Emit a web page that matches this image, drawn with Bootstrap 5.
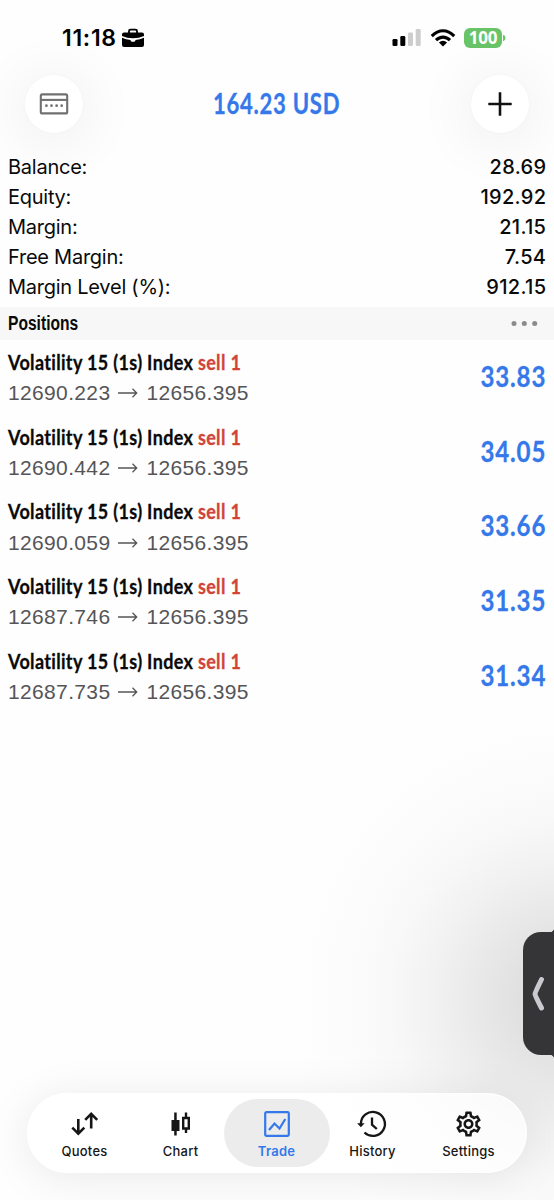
<!DOCTYPE html>
<html lang="en">
<head>
<meta charset="utf-8">
<meta name="viewport" content="width=device-width, initial-scale=1">
<title>Trade</title>
<link href="https://cdn.jsdelivr.net/npm/bootstrap@5.3.0/dist/css/bootstrap.min.css" rel="stylesheet">
<style>
body{background:#fefefe;font-family:Inter,"Liberation Sans",sans-serif;color:#0a0a0a}
.screen{height:1200px;overflow:hidden;
 background:radial-gradient(ellipse 275px 285px at 565px 1000px,#dcdcdc 0,#e1e1e1 18%,#e9e9e9 33%,#f1f1f1 47%,#f8f8f8 63%,#fcfcfc 80%,rgba(254,254,254,0) 100%)}
.status{height:75px;padding:1px 48px 0 62px}
.clock{font-size:23px;font-weight:600;letter-spacing:.7px;line-height:1;color:#000}
.battery{width:38px;height:20px;border-radius:6px;background:#68c466;color:#fff;font:700 17px/20px "Open Sans",sans-serif;letter-spacing:-.2px}
.topbar{height:58px;padding:0 25px}
.round-btn{width:58px;height:58px;border:0;background:#fff;box-shadow:0 6px 56px 8px rgba(0,0,0,.06),0 0 3px rgba(0,0,0,.03)}
.blue{color:#3478ea}
.squeeze{font-family:Lato,"Liberation Sans",sans-serif;font-weight:700;display:inline-block;white-space:nowrap;line-height:1;-webkit-text-stroke:.3px currentColor}
.total{font-size:28px;letter-spacing:.9px;transform:scaleX(.79);padding-bottom:3px}
.summary{padding:19px 8px 5px}
.summary>div{height:30px;font-size:20px;line-height:31px}
.summary dt{font-weight:400;letter-spacing:-.25px}
.summary dd{font-weight:500;margin:0 -.3px 0 0;letter-spacing:.3px}
.section-bar{height:33px;background:#f7f7f7;padding:0 16px 0 8px}
.section-name{font-family:"Liberation Sans",sans-serif;font-weight:700;font-size:20px;line-height:1;transform:scaleX(.78);transform-origin:left;padding-bottom:1px}
.position{height:74.67px;padding:10px 8px 0}
.symbol{font-size:21.5px;letter-spacing:.4px;transform:scaleX(.837);transform-origin:left;height:24px;line-height:24px}
.sell{color:#d0443a}
.prices{font-family:"Liberation Sans",sans-serif;font-size:21px;letter-spacing:.35px;line-height:24px;color:#555558;margin-top:5.4px}
.profit{font-size:29px;letter-spacing:1px;transform:scaleX(.83);transform-origin:right;margin-top:11px}
.handle{right:0;top:932px;width:31px;height:123px;background:#353538;border-radius:18px 0 0 18px}
.handle::before,.handle::after{content:"";position:absolute;right:0;width:3px;height:3px}
.handle::before{top:-3px;background:radial-gradient(circle at 0 0,transparent 2.5px,#353538 3px)}
.handle::after{bottom:-3px;background:radial-gradient(circle at 0 100%,transparent 2.5px,#353538 3px)}
.tabs{width:500px;height:80px;margin:0 0 27px 27px;padding:0 9px 0 9.5px;border-radius:40px;background:rgba(255,255,255,.72);box-shadow:0 5px 45px rgba(0,0,0,.085),inset 0 0 0 1.500px rgba(255,255,255,.7)}
.tab{width:96px;height:68px;color:#161616;font-size:13px;font-weight:500;letter-spacing:.25px;line-height:16px;padding-top:11px}
.tab svg{margin-bottom:5px}
.tab-on{width:106px;margin:0 -5px;background:#ececec;border-radius:34px;color:#3478ea;font-weight:600}
</style>
</head>
<body>
<main class="screen position-relative d-flex flex-column">
 <header>
  <div class="status d-flex align-items-center">
   <span class="clock">11:18</span>
   <svg class="ms-1" width="24" height="20" viewBox="0 0 24 20"><path d="M8 5V3q0-1.300 1.500-1.300h5Q16 1.700 16 3v2" fill="none" stroke="#000" stroke-width="1.800"/><path d="M3 4.500h18q2 0 2 2V8Q18 10.300 12 10.300T1 8V6.500q0-2 2-2zM1 9.700q4 2 8.500 2.300 0 1.700 1.500 1.700h2q1.500 0 1.500-1.700Q19 11.700 23 9.700V17q0 2-2 2H3q-2 0-2-2z"/></svg>
   <div class="ms-auto d-flex align-items-center">
    <svg width="29" height="20" viewBox="0 0 29 20"><rect x=".5" y="11" width="5" height="7" rx="1.300"/><rect x="8.300" y="8" width="5" height="10" rx="1.300"/><g fill="#cdcdcd"><rect x="16" y="4.500" width="5" height="13.500" rx="1.300"/><rect x="23.700" y="1" width="5" height="17" rx="1.300"/></g></svg>
    <svg style="margin-left:9px" width="26" height="20" viewBox="0 0 26 20" fill="none" stroke="#000" stroke-width="3.100"><path d="M1.800 8.100Q7 2.800 13 2.800t11.200 5.300M6 12.200q3.200-3.100 7-3.100t7 3.100"/><path d="M8.900 14.500q4.100-3.400 8.200 0L13 18.400z" fill="#000" stroke="none"/></svg>
    <span class="battery ms-2 text-center">100</span><svg width="4" height="8" viewBox="0 0 4 8"><path d="M1 .8Q3.500 1.400 3.500 4T1 7.200z" fill="#68c466"/></svg>
   </div>
  </div>
  <div class="topbar d-flex align-items-center justify-content-between">
   <button class="round-btn rounded-circle p-0" aria-label="Accounts"><svg class="d-block mx-auto" width="30" height="22" viewBox="0 0 30 22"><g fill="none" stroke="#707070" stroke-width="2.100"><rect x="1.800" y="1.400" width="26.400" height="19" rx="1.500"/><path d="M2 6.900h26"/></g><g fill="#707070"><circle cx="7.400" cy="12.700" r="1.350"/><circle cx="12.500" cy="12.700" r="1.350"/><circle cx="17.600" cy="12.700" r="1.350"/><circle cx="22.700" cy="12.700" r="1.350"/></g></svg></button>
   <h1 class="squeeze total blue m-0">164.23 USD</h1>
   <button class="round-btn rounded-circle p-0" aria-label="New order"><svg class="d-block mx-auto" width="24" height="24" viewBox="0 0 24 24"><path d="M12 .3v23.400M.3 12h23.400" stroke="#111" stroke-width="2.600"/></svg></button>
  </div>
 </header>
 <dl class="summary m-0">
  <div class="d-flex justify-content-between"><dt>Balance:</dt><dd>28.69</dd></div>
  <div class="d-flex justify-content-between"><dt>Equity:</dt><dd>192.92</dd></div>
  <div class="d-flex justify-content-between"><dt>Margin:</dt><dd>21.15</dd></div>
  <div class="d-flex justify-content-between"><dt>Free Margin:</dt><dd>7.54</dd></div>
  <div class="d-flex justify-content-between"><dt>Margin Level (%):</dt><dd>912.15</dd></div>
 </dl>
 <div class="section-bar d-flex align-items-center justify-content-between">
  <h2 class="section-name m-0">Positions</h2>
  <svg width="27" height="6" viewBox="0 0 27 6" fill="#8b8b8e"><circle cx="3" cy="2.500" r="2.500"/><circle cx="13.300" cy="2.500" r="2.500"/><circle cx="23.700" cy="2.500" r="2.500"/></svg>
 </div>
 <section>
  <div class="position d-flex justify-content-between"><div><div class="squeeze symbol">Volatility 15 (1s) Index <span class="sell">sell 1</span></div><div class="prices d-flex align-items-center"><span>12690.223</span><svg class="mx-2" width="20" height="10" viewBox="0 0 20 10" fill="none" stroke="#555558" stroke-width="1.300"><path d="M0 5h18.500M14.500.8 18.700 5l-4.200 4.200"/></svg><span>12656.395</span></div></div><div class="squeeze profit blue">33.83</div></div>
  <div class="position d-flex justify-content-between"><div><div class="squeeze symbol">Volatility 15 (1s) Index <span class="sell">sell 1</span></div><div class="prices d-flex align-items-center"><span>12690.442</span><svg class="mx-2" width="20" height="10" viewBox="0 0 20 10" fill="none" stroke="#555558" stroke-width="1.300"><path d="M0 5h18.500M14.500.8 18.700 5l-4.200 4.200"/></svg><span>12656.395</span></div></div><div class="squeeze profit blue">34.05</div></div>
  <div class="position d-flex justify-content-between"><div><div class="squeeze symbol">Volatility 15 (1s) Index <span class="sell">sell 1</span></div><div class="prices d-flex align-items-center"><span>12690.059</span><svg class="mx-2" width="20" height="10" viewBox="0 0 20 10" fill="none" stroke="#555558" stroke-width="1.300"><path d="M0 5h18.500M14.500.8 18.700 5l-4.200 4.200"/></svg><span>12656.395</span></div></div><div class="squeeze profit blue">33.66</div></div>
  <div class="position d-flex justify-content-between"><div><div class="squeeze symbol">Volatility 15 (1s) Index <span class="sell">sell 1</span></div><div class="prices d-flex align-items-center"><span>12687.746</span><svg class="mx-2" width="20" height="10" viewBox="0 0 20 10" fill="none" stroke="#555558" stroke-width="1.300"><path d="M0 5h18.500M14.500.8 18.700 5l-4.200 4.200"/></svg><span>12656.395</span></div></div><div class="squeeze profit blue">31.35</div></div>
  <div class="position d-flex justify-content-between"><div><div class="squeeze symbol">Volatility 15 (1s) Index <span class="sell">sell 1</span></div><div class="prices d-flex align-items-center"><span>12687.735</span><svg class="mx-2" width="20" height="10" viewBox="0 0 20 10" fill="none" stroke="#555558" stroke-width="1.300"><path d="M0 5h18.500M14.500.8 18.700 5l-4.200 4.200"/></svg><span>12656.395</span></div></div><div class="squeeze profit blue">31.34</div></div>
 </section>
 <div class="handle position-absolute d-flex align-items-center ps-2"><svg width="14" height="38" viewBox="0 0 14 38"><path d="M10.500 4.500Q4 17.500 4 19t6.500 14" fill="none" stroke="#c9c9d0" stroke-width="5" stroke-linecap="round" stroke-linejoin="round"/></svg></div>
 <nav class="tabs mt-auto d-flex align-items-center">
  <a class="tab d-flex flex-column align-items-center text-decoration-none"><svg width="28" height="28" viewBox="1 0 28 28" fill="none" stroke="currentColor" stroke-width="2.600"><path d="M8.300 9v14.500M2.300 17.700l6 6 6-6M21.200 18.500V4M15.200 9.800l6-6 6 6"/></svg>Quotes</a>
  <a class="tab d-flex flex-column align-items-center text-decoration-none"><svg width="28" height="28" viewBox="1.500 0 28 28"><path d="M8.700 2.500h2.500V10H14v11h-2.800v4.500H8.700V21H6V10h2.700z" fill="currentColor"/><path d="M20.500 2.500V8M20.500 18.500v4.500M17.700 8h5.600v10.500h-5.600z" fill="none" stroke="currentColor" stroke-width="2.400"/></svg>Chart</a>
  <a class="tab tab-on d-flex flex-column align-items-center text-decoration-none"><svg width="28" height="28" viewBox="0 0 28 28" fill="none" stroke="currentColor" stroke-width="2.200"><rect x="2.200" y="2.200" width="23.600" height="23.600" rx="1.200"/><path d="m6 20 5.500-6.500 5 5L22.300 9"/></svg>Trade</a>
  <a class="tab d-flex flex-column align-items-center text-decoration-none"><svg class="overflow-visible" width="28" height="28" viewBox="1.700 0 28 28"><path d="M3.600 14a12 12 0 1 1 3.600 8.500" fill="none" stroke="currentColor" stroke-width="2.300"/><path d="M-.2 13.300h7.500l-3.700 4z" fill="currentColor"/><path d="M14.700 7.500v7.200l4.800 4.300" fill="none" stroke="currentColor" stroke-width="2.300"/></svg>History</a>
  <a class="tab d-flex flex-column align-items-center text-decoration-none"><svg width="28" height="28" viewBox="1.200 .8 22.400 22.400" fill="currentColor"><path d="M19.430 12.980c.04-.32.070-.64.070-.98 0-.34-.03-.66-.07-.98l2.110-1.650c.19-.15.240-.42.120-.64l-2-3.460c-.09-.16-.26-.25-.44-.25-.06 0-.12.010-.17.030l-2.490 1c-.52-.4-1.080-.73-1.690-.98l-.38-2.650C14.460 2.180 14.250 2 14 2h-4c-.25 0-.46.180-.49.420l-.38 2.650c-.61.250-1.170.590-1.690.98l-2.490-1c-.06-.02-.12-.03-.18-.03-.17 0-.34.090-.43.250l-2 3.460c-.13.220-.07.490.12.640l2.110 1.650c-.04.320-.07.650-.07.980 0 .33.030.66.070.98l-2.110 1.650c-.19.150-.24.420-.12.640l2 3.460c.09.160.26.250.44.250.06 0 .12-.01.170-.03l2.490-1c.52.400 1.080.730 1.690.980l.38 2.650c.03.240.24.420.49.420h4c.25 0 .46-.18.490-.42l.38-2.650c.61-.25 1.170-.59 1.690-.98l2.490 1c.06.020.12.030.18.030.17 0 .34-.09.430-.25l2-3.460c.12-.22.070-.49-.12-.64l-2.110-1.650zm-1.980-1.710c.04.310.050.520.050.730 0 .21-.02.430-.05.730l-.14 1.130.89.700 1.080.84-.7 1.210-1.270-.51-1.040-.42-.9.680c-.43.320-.84.560-1.250.730l-1.060.43-.16 1.130-.2 1.350h-1.400l-.19-1.350-.16-1.130-1.060-.43c-.43-.18-.83-.41-1.230-.71l-.91-.7-1.060.43-1.270.51-.7-1.210 1.080-.84.890-.7-.14-1.130c-.03-.31-.05-.54-.05-.74s.020-.43.050-.73l.14-1.130-.89-.7-1.080-.84.700-1.210 1.270.51 1.040.42.900-.68c.43-.32.840-.56 1.250-.73l1.060-.43.160-1.130.2-1.350h1.390l.19 1.350.16 1.130 1.060.43c.43.180.83.410 1.230.71l.91.700 1.060-.43 1.270-.51.700 1.210-1.070.85-.89.700.14 1.130zM12 8c-2.210 0-4 1.790-4 4s1.790 4 4 4 4-1.790 4-4-1.790-4-4-4zm0 6c-1.100 0-2-.9-2-2s.9-2 2-2 2 .9 2 2-.9 2-2 2z"/></svg>Settings</a>
 </nav>
</main>
<script src="https://cdn.jsdelivr.net/npm/bootstrap@5.3.0/dist/js/bootstrap.bundle.min.js"></script>
</body>
</html>
